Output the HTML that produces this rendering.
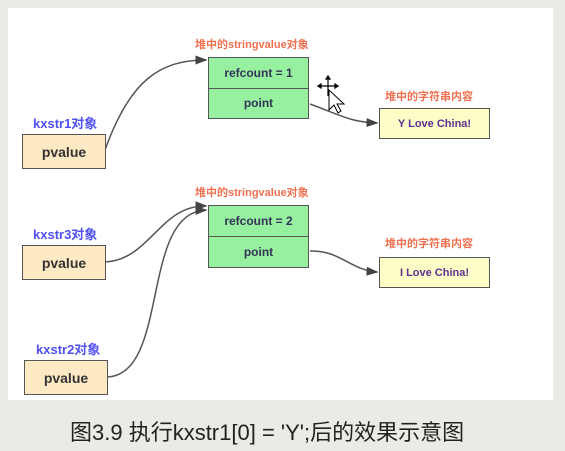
<!DOCTYPE html><html><head><meta charset="utf-8"><style>
body{margin:0;width:565px;height:451px;background:#ebeae4;position:relative;overflow:hidden;font-family:"Liberation Sans","Noto Sans CJK SC",sans-serif}
.p{position:absolute;left:8px;top:8px;width:545px;height:392px;background:#fff}
.b{position:absolute;box-sizing:border-box;border:1.5px solid #555;display:flex;align-items:center;justify-content:center;font-weight:bold;font-size:12px;color:#333}
.y{background:#fde9c4;font-size:14px}
.g{background:#96f0a0;flex-direction:column;font-size:12px;color:#335}
.g div{flex:1;width:100%;display:flex;align-items:center;justify-content:center}
.g div+div{border-top:1.5px solid #555}
.c{background:#fdfdc8;font-size:11px;color:#603090}
.l{position:absolute;font-size:11px;font-weight:bold;white-space:nowrap}
.o{color:#f07050}.bl{color:#5050f0;font-size:13px}
</style></head><body>
<div class="p"></div>
<svg style="position:absolute;left:0;top:0" width="565" height="451">
<defs><marker id="a" markerWidth="8" markerHeight="8" refX="7" refY="4" orient="auto"><path d="M0,1L8,4L0,7z" fill="#444"/></marker></defs>
<g fill="none" stroke="#555" stroke-width="1.5" marker-end="url(#a)">
<path d="M105,150C130,80 160,60 206,60"/>
<path d="M310,104C340,115 350,122 377,123"/>
<path d="M105,262C150,260 160,205 206,206"/>
<path d="M107,377C170,375 140,212 206,210"/>
<path d="M310,251C340,250 350,270 377,272"/>
</g>
<g stroke="#000" stroke-width="1.2" fill="#000">
<path d="M318,86H338M328,76V96" />
<path d="M318,86l3,-2v4zM338,86l-3,-2v4zM328,76l-2,3h4z"/>
</g>
<path d="M329,90V110L334,105L338,113L341,111L337,104L344,104Z" fill="#fff" stroke="#000" stroke-width="1"/>
</svg>
<div class="l o" style="left:195px;top:36px">堆中的stringvalue对象</div>
<div class="b g" style="left:208px;top:57px;width:101px;height:62px"><div>refcount = 1</div><div>point</div></div>
<div class="l o" style="left:385px;top:88px">堆中的字符串内容</div>
<div class="b c" style="left:379px;top:108px;width:111px;height:31px">Y Love China!</div>
<div class="l bl" style="left:33px;top:113px">kxstr1对象</div>
<div class="b y" style="left:22px;top:134px;width:84px;height:35px">pvalue</div>
<div class="l o" style="left:195px;top:184px">堆中的stringvalue对象</div>
<div class="b g" style="left:208px;top:205px;width:101px;height:63px"><div>refcount = 2</div><div>point</div></div>
<div class="l o" style="left:385px;top:235px">堆中的字符串内容</div>
<div class="b c" style="left:379px;top:257px;width:111px;height:31px">I Love China!</div>
<div class="l bl" style="left:33px;top:224px">kxstr3对象</div>
<div class="b y" style="left:22px;top:245px;width:84px;height:35px">pvalue</div>
<div class="l bl" style="left:36px;top:339px">kxstr2对象</div>
<div class="b y" style="left:24px;top:360px;width:84px;height:35px">pvalue</div>
<div style="position:absolute;left:70px;top:415px;font-size:22px;color:#222;white-space:nowrap">图3.9 执行kxstr1[0] = 'Y';后的效果示意图</div>
</body></html>
